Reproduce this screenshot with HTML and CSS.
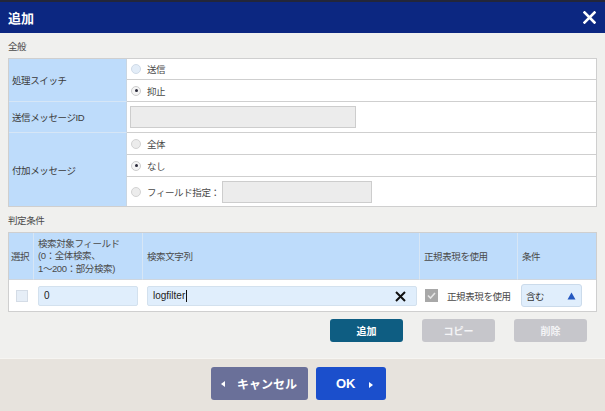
FILE: index.html
```html
<!DOCTYPE html>
<html lang="ja">
<head>
<meta charset="utf-8">
<title>追加</title>
<link rel="stylesheet" href="styles.css">
</head>
<body>
<div class="dialog">
  <header class="titlebar">
    <span class="title">追加</span>
    <span class="close" aria-label="閉じる">
      <svg width="13" height="13" viewBox="0 0 13 13"><path d="M1.5 1.5 L11.5 11.5 M11.5 1.5 L1.5 11.5" stroke="#fff" stroke-width="2.6" stroke-linecap="square"/></svg>
    </span>
  </header>

  <main class="content">
    <div class="section-title">全般</div>
    <div class="general">
      <div class="label span2">処理スイッチ</div>
      <div class="value"><span class="radio blue"></span>送信</div>
      <div class="value"><span class="radio checked"></span>抑止</div>

      <div class="label">送信メッセージID</div>
      <div class="value"><span class="textbox wide"></span></div>

      <div class="label span3 last">付加メッセージ</div>
      <div class="value"><span class="radio"></span>全体</div>
      <div class="value"><span class="radio checked"></span>なし</div>
      <div class="value last"><span class="radio"></span>フィールド指定：<span class="textbox field"></span></div>
    </div>

    <div class="section-title">判定条件</div>
    <div class="conditions">
      <div class="th">選択</div>
      <div class="th multi">検索対象フィールド<br>(0：全体検索、<br>1～200：部分検索)</div>
      <div class="th">検索文字列</div>
      <div class="th">正規表現を使用</div>
      <div class="th lastcol">条件</div>

      <div class="td center"><span class="checkbox"></span></div>
      <div class="td"><span class="input num">0</span></div>
      <div class="td"><span class="input search">logfilter<span class="caret"></span>
        <svg class="clear" width="11" height="11" viewBox="0 0 11 11"><path d="M1 1 L10 10 M10 1 L1 10" stroke="#111" stroke-width="2"/></svg></span></div>
      <div class="td"><span class="checkbox gray"><svg width="13" height="13" viewBox="0 0 13 13"><path d="M3 6.5 L5.5 9 L10 4" fill="none" stroke="#e6e6e6" stroke-width="1.6"/></svg></span><span class="cb-label">正規表現を使用</span></div>
      <div class="td"><span class="select">含む<svg width="9" height="8" viewBox="0 0 9 8"><path d="M4.5 0.5 L8.5 7.5 L0.5 7.5 Z" fill="#2458c0"/></svg></span></div>
    </div>

    <div class="actions">
      <button class="btn primary">追加</button>
      <button class="btn muted">コピー</button>
      <button class="btn muted">削除</button>
    </div>
  </main>

  <footer class="footer">
    <button class="fbtn cancel"><span class="tri left"></span>キャンセル</button>
    <button class="fbtn ok">OK<span class="tri right"></span></button>
  </footer>
</div>
</body>
</html>
```

FILE: styles.css
```css
* { box-sizing: border-box; }
html, body { margin: 0; padding: 0; }
body {
  width: 605px;
  height: 411px;
  overflow: hidden;
  font-family: "Liberation Sans", "Noto Sans CJK JP", sans-serif;
  font-size: 9.5px;
  letter-spacing: -0.4px;
  color: #4a4a4a;
}
.dialog {
  display: flex;
  flex-direction: column;
  height: 411px;
}
.titlebar {
  height: 33px;
  flex: none;
  background: #0c2781;
  border-top: 2px solid #23263a;
  display: flex;
  align-items: center;
  justify-content: space-between;
  padding: 0 9px 0 8px;
}
.title {
  color: #fff;
  font-weight: bold;
  font-size: 13px;
  letter-spacing: 0;
  font-family: "Noto Sans CJK JP", sans-serif;
}
.close { display: flex; }

.content {
  flex: 1;
  background: #f0f0ee;
  padding: 0 8px;
  display: flex;
  flex-direction: column;
}
.section-title {
  height: 25px;
  display: flex;
  align-items: center;
  color: #4a4a4a;
}

/* general grid */
.general {
  display: grid;
  grid-template-columns: 118px 1fr;
  grid-template-rows: 21px 22px 31px 22px 22px 29px;
  border: 1px solid #cfcfcf;
  background: #fff;
}
.label {
  background: #bedcfb;
  border-right: 1px solid #c9d6e2;
  border-bottom: 1px solid #d6e6f6;
  display: flex;
  align-items: center;
  padding-left: 3px;
  color: #3a3a3a;
}
.label.span2 { grid-row: span 2; }
.label.span3 { grid-row: span 3; }
.label.last, .value.last { border-bottom: none; }
.value {
  display: flex;
  align-items: center;
  padding-left: 4px;
  border-bottom: 1px solid #cfcfcf;
}
.radio {
  width: 10px;
  height: 10px;
  border-radius: 50%;
  border: 1px solid #d3d3d3;
  background: #ececec;
  margin-right: 6px;
  flex: none;
  position: relative;
}
.radio.blue { background: #e3edf8; border-color: #d0dbe8; }
.radio.checked { background: #f4f4f4; border-color: #cdcdcd; }
.radio.checked::after {
  content: "";
  position: absolute;
  left: 2.5px;
  top: 2.5px;
  width: 3px;
  height: 3px;
  border-radius: 50%;
  background: #2a2a3a;
}
.textbox {
  display: block;
  height: 22px;
  background: #ececec;
  border: 1px solid #cdcdcd;
}
.textbox.wide { width: 226px; margin-left: -1px; }
.textbox.field { width: 150px; margin-left: 2px; }

/* conditions grid */
.conditions {
  display: grid;
  grid-template-columns: 25px 109px 277px 98px 1fr;
  grid-template-rows: 47px 31px;
  border: 1px solid #cfcfcf;
  background: #fff;
}
.th {
  background: #bedcfb;
  border-right: 1px solid #d7e6f5;
  border-bottom: 1px solid #cfd6de;
  display: flex;
  align-items: center;
  padding-left: 4px;
}
.th:first-child { padding-left: 2px; }
.th.multi { line-height: 12.5px; padding-top: 1px; }
.th.lastcol { border-right: none; }
.td {
  display: flex;
  align-items: center;
  padding-left: 4px;
}
.td.center { justify-content: center; padding-left: 0; }
.checkbox {
  width: 12px;
  height: 12px;
  border: 1px solid #d4dce6;
  background: #e6eef7;
  display: flex;
}
.checkbox.gray {
  width: 13px;
  height: 13px;
  background: #a8a8a8;
  border: none;
  margin-left: 1px;
}
.cb-label { margin-left: 9px; }
.input {
  display: flex;
  align-items: center;
  height: 20px;
  background: #e0eefc;
  border: 1px solid #d3e1ee;
  border-radius: 2px;
  padding-left: 5px;
  color: #222;
  font-size: 10px;
  letter-spacing: 0;
}
.input.num { width: 100px; }
.input.search {
  width: 270px;
  position: relative;
}
.caret {
  display: inline-block;
  width: 1px;
  height: 12px;
  background: #111;
  margin-left: 1px;
}
.clear { position: absolute; right: 10px; top: 4px; }
.select {
  width: 61px;
  height: 23px;
  display: flex;
  align-items: center;
  justify-content: space-between;
  background: #e0eefc;
  border: 1px solid #cbdbeb;
  border-radius: 3px;
  padding: 0 5px 0 4px;
  color: #333;
  margin-left: -1px;
}

.actions {
  display: flex;
  justify-content: flex-end;
  gap: 19px;
  margin-top: 7px;
  padding-right: 10px;
}
.btn {
  width: 73px;
  height: 23px;
  border: none;
  border-radius: 3px;
  font-family: "Noto Sans CJK JP", sans-serif;
  font-size: 10px;
  font-weight: bold;
  letter-spacing: 0;
  padding: 0;
}
.btn.primary { background: #0e5d82; color: #fff; }
.btn.muted { background: #c6c6cb; color: #f4f4f6; }

.footer {
  height: 53px;
  flex: none;
  background: #e7e3dd;
  border-top: 1px solid #f6f5f2;
  display: flex;
  justify-content: center;
  gap: 8px;
  padding-top: 8px;
  padding-right: 8px;
}
.fbtn {
  height: 33px;
  border: none;
  border-radius: 3px;
  color: #fff;
  font-family: "Liberation Sans", "Noto Sans CJK JP", sans-serif;
  font-weight: bold;
  font-size: 12px;
  letter-spacing: 0;
  display: flex;
  align-items: center;
  padding: 0;
}
.fbtn.cancel { width: 97px; background: #6a7099; padding-left: 10px; }
.fbtn.ok { width: 70px; background: #1b4fcc; padding-left: 20px; font-size: 13px; }
.tri {
  width: 0;
  height: 0;
  border-top: 3.5px solid transparent;
  border-bottom: 3.5px solid transparent;
}
.tri.left { border-right: 4px solid #fff; margin-right: 12px; }
.tri.right { border-left: 4px solid #fff; margin-left: 13px; margin-top: 2px; }
```
